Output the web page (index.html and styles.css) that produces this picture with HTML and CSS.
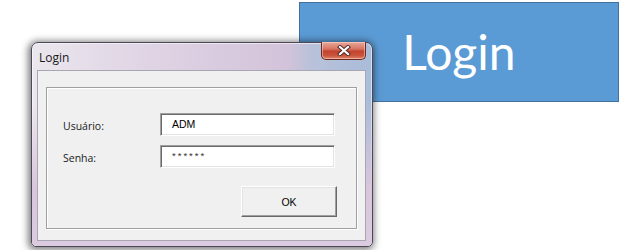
FILE: index.html
```html
<!DOCTYPE html>
<html>
<head>
<meta charset="utf-8">
<link rel="stylesheet" href="styles.css">
</head>
<body>
<div class="stage">
  <div class="banner">Login</div>

  <div class="window">
    <div class="titlebar">
      <span class="title">Login</span>
      <div class="close">
        <svg width="14" height="11" viewBox="0 0 14 11">
          <path d="M3 2 L11 9 M11 2 L3 9" stroke="#4a2a28" stroke-width="4" stroke-linecap="square" fill="none"/>
          <path d="M3 2 L11 9 M11 2 L3 9" stroke="#ffffff" stroke-width="2.2" stroke-linecap="square" fill="none"/>
        </svg>
      </div>
    </div>
    <div class="client">
      <div class="group">
        <div class="form">
          <label class="label">Usuário:</label>
          <div class="field">ADM</div>
          <label class="label">Senha:</label>
          <div class="field pass">******</div>
        </div>
        <div class="actions">
          <div class="button">OK</div>
        </div>
      </div>
    </div>
  </div>
</div>
</body>
</html>
```
FILE: styles.css
```css
html, body {
  margin: 0;
  padding: 0;
  background: #ffffff;
}

.stage {
  position: relative;
  width: 630px;
  height: 250px;
  overflow: hidden;
  padding-top: 2px;
  box-sizing: border-box;
}

.banner {
  margin-left: 299px;
  width: 320px;
  height: 100px;
  box-sizing: border-box;
  background: #5b9bd5;
  border: 1px solid #41719c;
  color: #ffffff;
  font-family: Lato, "Open Sans", sans-serif;
  font-size: 48px;
  display: flex;
  align-items: center;
  justify-content: center;
  padding-bottom: 2px;
}

.window {
  position: absolute;
  left: 31px;
  top: 42px;
  width: 342px;
  height: 205px;
  box-sizing: border-box;
  border: 1px solid #4c4858;
  border-radius: 7px 7px 5px 5px;
  background: linear-gradient(90deg, #ebe7ee 0%, #e2d8e6 25%, #d9cbdf 55%, #d3c3da 75%, #b9c2da 82%, #a9bcd9 100%);
  box-shadow: -1px 1px 7px 2px rgba(0, 0, 0, 0.5), inset 0 0 0 1px rgba(255, 255, 255, 0.55);
  display: flex;
  flex-direction: column;
  padding: 0 6px 5px 5px;
}

.window::after {
  content: "";
  position: absolute;
  left: 0;
  right: 0;
  top: 60px;
  bottom: 0;
  border-radius: 0 0 5px 5px;
  background: linear-gradient(180deg, rgba(216, 200, 222, 0) 0%, #d9c6dc 60%, #dccbe0 100%);
  z-index: 0;
}

.titlebar {
  position: relative;
  z-index: 1;
  height: 27px;
  display: flex;
  align-items: flex-start;
  justify-content: space-between;
}

.title {
  font-family: "Open Sans", sans-serif;
  font-size: 12px;
  color: #1a1a1a;
  padding: 6px 0 0 2px;
}

.close {
  width: 45px;
  height: 18px;
  margin-top: -1px;
  box-sizing: border-box;
  border: 1px solid #6a2b22;
  border-top: none;
  border-radius: 0 0 5px 5px;
  background: linear-gradient(180deg, #e9a99b 0%, #d87564 40%, #c2432f 55%, #c9553d 80%, #e0866d 100%);
  box-shadow: inset 0 0 0 1px rgba(255, 220, 210, 0.5);
  display: flex;
  align-items: center;
  justify-content: center;
}

.client {
  position: relative;
  z-index: 1;
  flex: 1;
  background: #f0f0f0;
  border: 1px solid #a9a6b4;
  padding: 16px 8px 11px 8px;
  display: flex;
}

.group {
  flex: 1;
  border: 1px solid #a0a0a0;
  box-shadow: inset 1px 1px 0 #ffffff, 1px 1px 0 #ffffff;
  padding: 25px 20px 0 16px;
  font-family: "Open Sans", sans-serif;
}

.form {
  display: grid;
  grid-template-columns: 97px 175px;
  row-gap: 9px;
  align-items: start;
}

.label {
  font-size: 10.5px;
  color: #1a1a1a;
  padding-top: 6px;
}

.field {
  height: 23px;
  box-sizing: border-box;
  background: #ffffff;
  border-top: 1px solid #a0a0a0;
  border-left: 1px solid #a0a0a0;
  border-right: 1px solid #ffffff;
  border-bottom: 1px solid #ffffff;
  box-shadow: inset 1px 1px 0 #696969, inset -1px -1px 0 #e3e3e3;
  font-family: "Liberation Sans", Arial, sans-serif;
  font-size: 10.5px;
  color: #000000;
  padding: 4px 0 0 11px;
}

.pass {
  font-size: 9.5px;
  letter-spacing: 2px;
  color: #333333;
  padding-top: 4px;
}

.actions {
  display: flex;
  justify-content: flex-end;
  margin-top: 18px;
}

.button {
  width: 96px;
  height: 31px;
  box-sizing: border-box;
  background: #f0f0f0;
  border-top: 1px solid #ffffff;
  border-left: 1px solid #ffffff;
  border-right: 1px solid #696969;
  border-bottom: 1px solid #696969;
  box-shadow: inset -1px -1px 0 #a0a0a0, inset 1px 1px 0 #e3e3e3;
  font-family: "Liberation Sans", Arial, sans-serif;
  font-size: 10.5px;
  color: #000000;
  display: flex;
  align-items: center;
  justify-content: center;
  margin-right: -1px;
}
```
